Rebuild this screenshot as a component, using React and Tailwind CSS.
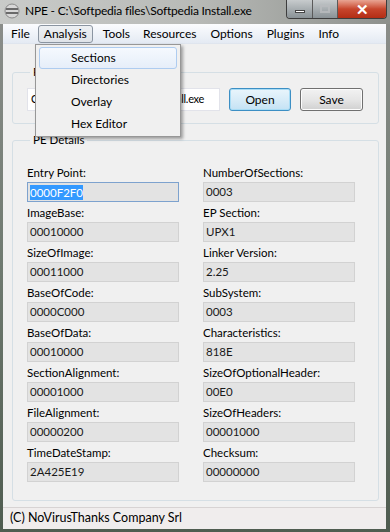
import React from 'react';

const font = { fontFamily: 'Lato, "Noto Sans", sans-serif' };

const left = [
  ['Entry Point:', '0000F2F0'],
  ['ImageBase:', '00010000'],
  ['SizeOfImage:', '00011000'],
  ['BaseOfCode:', '0000C000'],
  ['BaseOfData:', '00010000'],
  ['SectionAlignment:', '00001000'],
  ['FileAlignment:', '00000200'],
  ['TimeDateStamp:', '2A425E19'],
];

const right = [
  ['NumberOfSections:', '0003'],
  ['EP Section:', 'UPX1'],
  ['Linker Version:', '2.25'],
  ['SubSystem:', '0003'],
  ['Characteristics:', '818E'],
  ['SizeOfOptionalHeader:', '00E0'],
  ['SizeOfHeaders:', '00001000'],
  ['Checksum:', '00000000'],
];

function Field({ label, value, focused }) {
  return (
    <div className="flex flex-col">
      <div className="h-[14px] leading-[14px] text-[11.5px] text-black">{label}</div>
      <div
        className={`mt-[2px] h-[20px] w-[152px] flex items-center px-[2px] text-[11.5px] text-[#1a1a1a] bg-[#e3e3e3] border ${
          focused ? 'border-[#7da2ce]' : 'border-[#d2d2d2]'
        }`}
      >
        {focused ? <span className="bg-[#3399ff] text-white leading-[15px]">{value}</span> : value}
      </div>
    </div>
  );
}

function TitleIcon() {
  return (
    <svg width="16" height="16" viewBox="0 0 16 16">
      <circle cx="8" cy="8" r="7" fill="#d8d8d8" stroke="#8a8a8a" />
      <rect x="2" y="5" width="12" height="2" fill="#6a6a6a" />
      <rect x="2" y="9" width="12" height="2" fill="#6a6a6a" />
    </svg>
  );
}

export default function App() {
  return (
    <div
      className="relative w-[390px] h-[532px] overflow-hidden flex flex-col bg-gradient-to-b from-[#8d8f8c] via-[#6f7a70] to-[#4f5c50]"
      style={font}
    >
      {/* title bar */}
      <div className="h-[24px] flex items-start bg-gradient-to-r from-[#c9cbc9] via-[#b8bab7] to-[#8e918d]">
        <div className="ml-[4px] mt-[3px] shrink-0"><TitleIcon /></div>
        <div className="ml-[5px] mt-[2px] text-[12px] tracking-[-0.2px] text-black leading-[18px] whitespace-nowrap">
          NPE - C:\Softpedia files\Softpedia Install.exe
        </div>
        <div className="ml-auto mr-[3px] shrink-0 flex h-[19px] rounded-b-[4px] overflow-hidden border border-t-0 border-[#3d3d3d]">
          <div className="w-[26px] flex items-center justify-center bg-gradient-to-b from-[#c7cbcd] to-[#8a9296] border-r border-[#5a5a5a]">
            <div className="w-[10px] h-[3px] bg-white border border-[#444] mt-[5px]" />
          </div>
          <div className="w-[25px] flex items-center justify-center bg-gradient-to-b from-[#c7cbcd] to-[#8a9296] border-r border-[#5a5a5a]">
            <div className="w-[10px] h-[8px] border-2 border-[#b9bcbe] opacity-80" />
          </div>
          <div className="w-[48px] flex items-center justify-center bg-gradient-to-b from-[#e8a493] via-[#c7452c] to-[#b32d14]">
            <span className="text-white text-[15px] font-bold leading-none">✕</span>
          </div>
        </div>
      </div>

      {/* client */}
      <div className="mx-[3px] mr-[4px] flex-1 flex flex-col bg-[#f0f0f0]">
        {/* menu bar */}
        <div className="h-[20px] flex items-center text-[12px] text-black bg-gradient-to-b from-[#fbfcfe] to-[#e4eaf3] border-b border-[#dfe5ee]">
          <div className="ml-[6px] px-[2px]">File</div>
          <div className="ml-[6px] px-[5px] h-[18px] flex items-center rounded-[3px] border border-[#8b95a1] bg-gradient-to-b from-[#edf0f3] to-[#dfe3e8]">Analysis</div>
          <div className="ml-[10px]">Tools</div>
          <div className="ml-[13px]">Resources</div>
          <div className="ml-[14px]">Options</div>
          <div className="ml-[14px]">Plugins</div>
          <div className="ml-[14px]">Info</div>
        </div>

        {/* PE File */}
        <fieldset className="mt-[21px] ml-[9px] w-[367px] border border-[#d5dfe5] rounded-[3px] pl-[14px] pt-[9px] pb-[12px]">
          <legend className="ml-[3px] px-[3px] text-[11.5px] leading-[14px] text-black">PE File</legend>
          <div className="flex items-center">
            <div className="w-[193px] h-[23px] bg-white border border-[#e2e3ea] flex items-center px-[3px] text-[11px] tracking-[-0.3px] overflow-hidden whitespace-nowrap">
              C:\Softpedia files\Softpedia Install.exe
            </div>
            <button className="ml-[9px] w-[62px] h-[23px] text-[12px] rounded-[3px] border border-[#3c8fc4] bg-gradient-to-b from-[#e9f5fc] via-[#d8ecf8] to-[#c4e2f4] shadow-[inset_0_0_0_1px_#a8dcf5]">
              Open
            </button>
            <button className="ml-[9px] w-[63px] h-[23px] text-[12px] rounded-[3px] border border-[#707070] bg-gradient-to-b from-[#f2f2f2] via-[#e6e6e6] to-[#d0d0d0] shadow-[inset_0_0_0_1px_#fcfcfc]">
              Save
            </button>
          </div>
        </fieldset>

        {/* PE Details */}
        <fieldset className="mt-[9px] ml-[9px] w-[367px] border border-[#d5dfe5] rounded-[3px] pl-[14px] pt-[19px] pb-[18px]">
          <legend className="ml-[3px] px-[3px] text-[11.5px] leading-[14px] text-black">PE Details</legend>
          <div className="grid grid-cols-[152px_152px] gap-x-[24px] gap-y-[4px]">
            {left.map((l, i) => (
              <React.Fragment key={l[0]}>
                <Field label={l[0]} value={l[1]} focused={i === 0} />
                <Field label={right[i][0]} value={right[i][1]} />
              </React.Fragment>
            ))}
          </div>
        </fieldset>

        {/* status bar */}
        <div className="mt-auto h-[22px] border-t border-[#d7d3d3] bg-[#f0eded] flex items-center pl-[7px] text-[12.5px] text-black">
          (C) NoVirusThanks Company Srl
        </div>
      </div>
      <div className="h-[3px]" />

      {/* Analysis dropdown */}
      <div className="absolute left-[35px] top-[44px] w-[146px] h-[93px] bg-[#f0f0f0] border border-[#979797] shadow-[2px_2px_3px_rgba(0,0,0,0.35)] py-[2px] px-[3px] text-[12px] text-black">
        {['Sections', 'Directories', 'Overlay', 'Hex Editor'].map((t, i) => (
          <div
            key={t}
            className={`h-[22px] flex items-center pl-[31px] rounded-[3px] border ${
              i === 0 ? 'border-[#aeccf0] bg-gradient-to-b from-[#f5f9fe] to-[#e6eef9]' : 'border-transparent'
            }`}
          >
            {t}
          </div>
        ))}
      </div>
    </div>
  );
}
